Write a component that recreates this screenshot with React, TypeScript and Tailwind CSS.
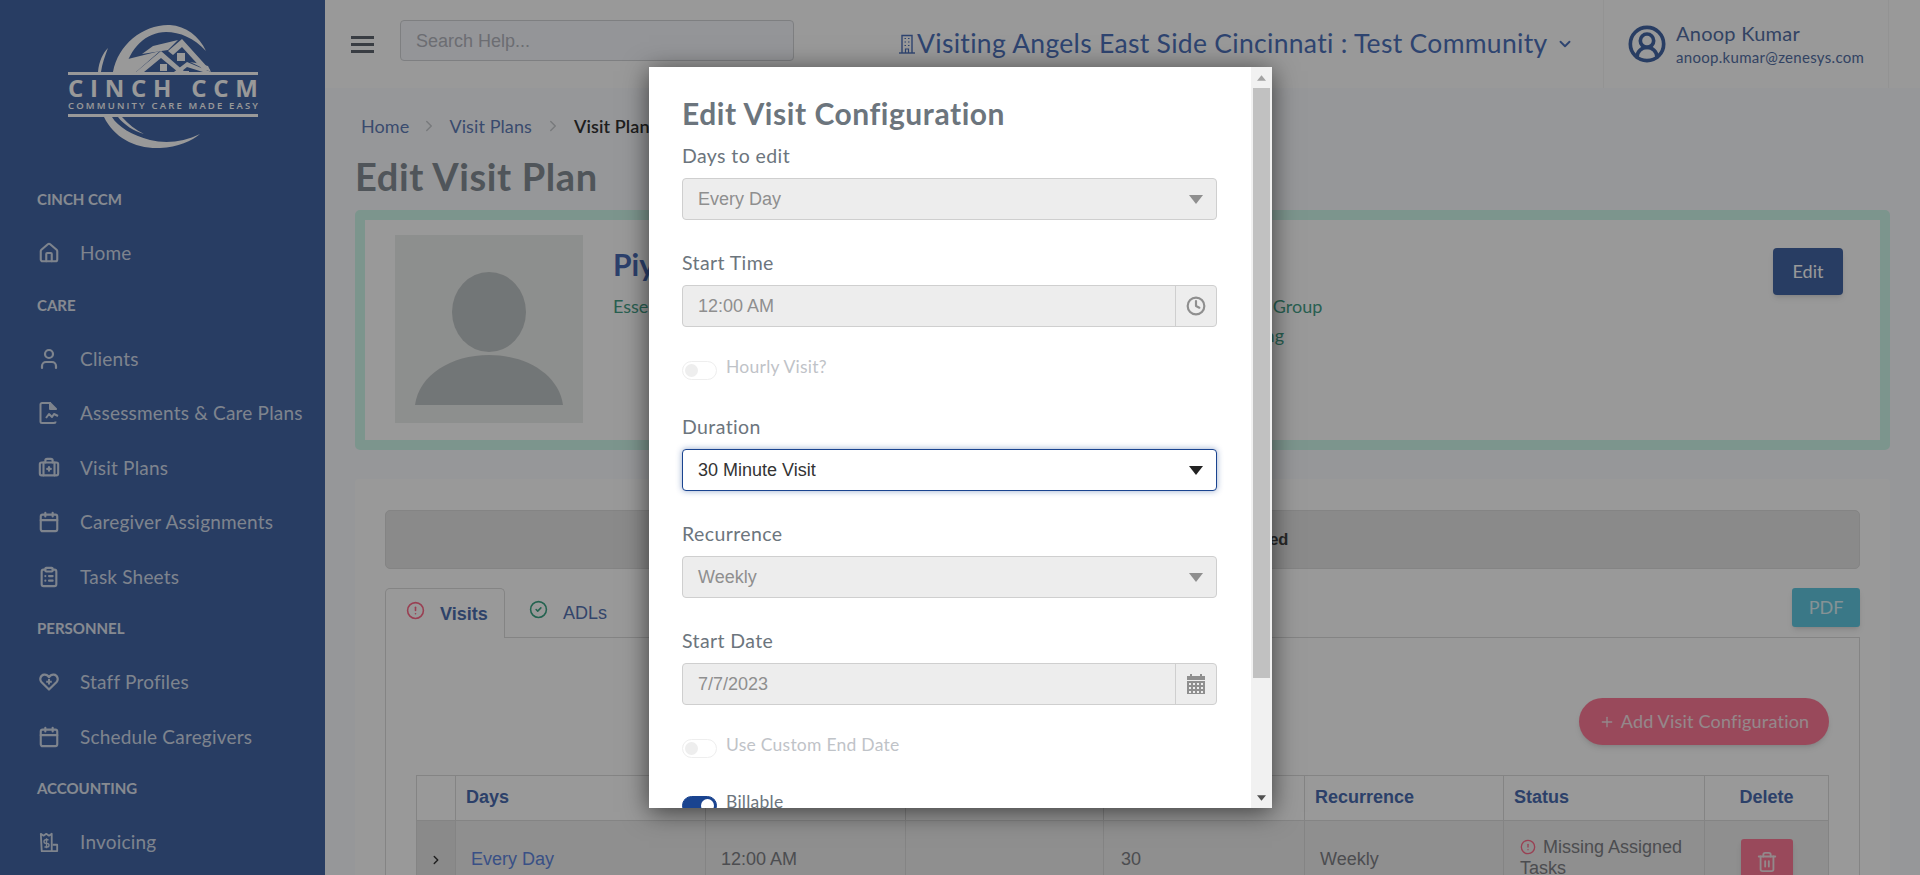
import type { ReactNode } from 'react';
import {
  BriefcaseMedical,
  Calendar,
  ChevronDown,
  ChevronRight,
  CircleAlert,
  CircleCheck,
  CircleUserRound,
  ClipboardList,
  Clock,
  Home,
  Plus,
  Trash2,
  User,
} from 'lucide-react';

const arial = "font-['Liberation_Sans',Arial,sans-serif]";

function Logo() {
  return (
    <svg viewBox="0 0 210 135" className="w-[210px] h-[135px]" fill="#fff">
      {/* ring */}
      <path d="M53 52 C58 24 84 4 110 5 C126 6 139 16 146 31 C134 18 120 12 106 12 C86 12 70 28 64 52 Z" />
      <path d="M38 52 C39 41 43 33 48 28 C45 36 42 44 41 52 Z" />
      <path d="M44 97 C54 118 76 129 100 128 C118 127 132 121 140 114 C124 122 106 124 90 120 C72 115 58 107 52 97 Z" />
      <path d="M62 97 C68 104 76 110 84 114 C74 111 64 105 58 97 Z" />
      {/* roofs */}
      <path d="M53 52 L68 39 L100 31 L76 52 Z" />
      <path d="M82 34 L93 26 L118 20 L108 30 Z" />
      <path d="M76 52 L101 31 L125 52 L118 52 L101 38 L84 52 Z" />
      <path d="M108 31 L122 19 L150 50 L143 50 L122 27 L113 35 Z" />
      <path d="M110 55 L127 42 L151 52 L143 52 L127 47 L117 55 Z" />
      <path d="M130 42 L136 43 L148 46 L151 52 Z" />
      {/* windows */}
      <path d="M117 33 H125 V41 H117 Z M100 44 H107 V51 H100 Z M124 51 H129 V55 H124 Z" />
      {/* rules and wordmark */}
      <rect x="8" y="52" width="190" height="3" />
      <rect x="8" y="94" width="190" height="3" />
      <text x="8" y="77" fontFamily="Open Sans, sans-serif" fontWeight="700" fontSize="24" textLength="190">
        CINCH CCM
      </text>
      <text x="8" y="89" fontFamily="Open Sans, sans-serif" fontWeight="600" fontSize="9.5" textLength="190">
        COMMUNITY CARE MADE EASY
      </text>
    </svg>
  );
}

function AssessIcon() {
  return (
    <svg viewBox="0 0 20 22" className="w-[20px] h-[22px]" fill="none" stroke="currentColor" strokeWidth="2" strokeLinejoin="round">
      <path d="M12 1 H3 a1.5 1.5 0 0 0 -1.5 1.5 V19.5 A1.5 1.5 0 0 0 3 21 H15 a1.5 1.5 0 0 0 1.5 -1.5" />
      <path d="M11 1 L17 7 H11 Z" fill="currentColor" />
      <path d="M7 16 L10 12 L13 15 L15 12 L19 14" />
    </svg>
  );
}

function InvoiceIcon() {
  return (
    <svg viewBox="0 0 20 22" className="w-[20px] h-[20px]" fill="none" stroke="currentColor" strokeWidth="2" strokeLinejoin="round">
      <path d="M1 2 L4 4 L7 2 L10 4 L13 2 V21 H2 Z" />
      <path d="M14 14 H19 V21 H13" />
      <path d="M9.5 8.5 H6.5 a1.5 1.5 0 0 0 0 4 H8 a1.5 1.5 0 0 1 0 4 H5 M7.3 7 V18" strokeWidth="1.5" />
    </svg>
  );
}

function StaffIcon() {
  return (
    <svg viewBox="0 0 20 18" className="w-[20px] h-[18px]" fill="none" stroke="currentColor" strokeWidth="2.2" strokeLinejoin="round">
      <path d="M10 16.5 L2.4 9 C0.4 6.8 1.2 2 5.2 1.6 C7.4 1.4 9 2.6 10 4.2 C11 2.6 12.6 1.4 14.8 1.6 C18.8 2 19.6 6.8 17.6 9 Z" />
      <path d="M10 6 V11.5 M7.2 8.7 H12.8" strokeWidth="2" />
    </svg>
  );
}

function BuildingIcon() {
  return (
    <svg viewBox="0 0 16 20" className="w-[16px] h-[20px]" fill="none" stroke="currentColor" strokeWidth="1.4">
      <path d="M3 19 V1.5 H13 V19" />
      <path d="M0 19 H16" />
      <path d="M5.5 4.5 H7 M9 4.5 H10.5 M5.5 8 H7 M9 8 H10.5 M5.5 11.5 H7 M9 11.5 H10.5 M6.5 19 V15 H9.5 V19" strokeWidth="1.2" />
    </svg>
  );
}

function NavSection({ children }: { children: ReactNode }) {
  return (
    <div className="h-[51px] pb-[2px] pl-[37px] flex items-center text-[15px] font-bold text-[#e0e6f2]">
      {children}
    </div>
  );
}

function NavItem({ icon, label }: { icon: ReactNode; label: string }) {
  return (
    <div className="h-[54.5px] pl-[38px] flex items-center text-[#d2dcec]">
      <div className="w-[22px] flex justify-center">{icon}</div>
      <span className="ml-[20px] text-[19px] tracking-[0.2px] whitespace-nowrap">{label}</span>
    </div>
  );
}

function Sidebar() {
  const ic = 'w-[22px] h-[22px] shrink-0';
  return (
    <aside className="w-[325px] shrink-0 h-full bg-[#4466a5] overflow-hidden">
      <div className="h-[175px] pt-[20px] pl-[60px]">
        <Logo />
      </div>
      <NavSection>CINCH CCM</NavSection>
      <NavItem icon={<Home className={ic} strokeWidth={2.3} />} label="Home" />
      <NavSection>CARE</NavSection>
      <NavItem icon={<User className="w-[24px] h-[24px] shrink-0" strokeWidth={2.2} />} label="Clients" />
      <NavItem icon={<AssessIcon />} label="Assessments & Care Plans" />
      <NavItem icon={<BriefcaseMedical className={ic} strokeWidth={2.3} />} label="Visit Plans" />
      <NavItem icon={<Calendar className={ic} strokeWidth={2.3} />} label="Caregiver Assignments" />
      <NavItem icon={<ClipboardList className={ic} strokeWidth={2.3} />} label="Task Sheets" />
      <NavSection>PERSONNEL</NavSection>
      <NavItem icon={<StaffIcon />} label="Staff Profiles" />
      <NavItem icon={<Calendar className={ic} strokeWidth={2.3} />} label="Schedule Caregivers" />
      <NavSection>ACCOUNTING</NavSection>
      <NavItem icon={<InvoiceIcon />} label="Invoicing" />
    </aside>
  );
}

function Topbar() {
  return (
    <header className="h-[88px] shrink-0 bg-white flex items-center">
      <div className="ml-[26px] w-[23px] flex flex-col gap-[4px]">
        <div className="h-[3px] bg-[#5f6670]" />
        <div className="h-[3px] bg-[#5f6670]" />
        <div className="h-[3px] bg-[#5f6670]" />
      </div>
      <div className={`ml-[26px] w-[394px] h-[41px] -mt-[7px] rounded-[4px] border border-[#d2d4d8] bg-[#f7f9fe] pl-[15px] pt-[1px] flex items-center text-[18px] text-[#b4b6be] ${arial}`}>
        Search Help...
      </div>
      <div className="ml-[105px] flex items-center text-[#4e72bb]">
        <BuildingIcon />
        <span className="ml-[2px] text-[26.5px] tracking-[0.3px] whitespace-nowrap">Visiting Angels East Side Cincinnati : Test Community</span>
        <ChevronDown className="ml-[9px] w-[18px] h-[18px]" strokeWidth={2.5} />
      </div>
      <div className="ml-auto mr-[31px] w-[286px] h-full border-x border-[#f5f5f5] flex items-center pl-[23px] bg-white">
        <CircleUserRound className="w-[40px] h-[40px] text-[#4466a5]" strokeWidth={2.2} />
        <div className="ml-[9px] -mt-[1px] text-[#5470a6] leading-none">
          <div className="text-[20px] tracking-[0.25px]">Anoop Kumar</div>
          <div className="mt-[7px] text-[15px] tracking-[0.3px]">anoop.kumar@zenesys.com</div>
        </div>
      </div>
    </header>
  );
}

function Breadcrumb() {
  return (
    <div className="mt-[26px] h-6 pl-[6px] flex items-center text-[18px] tracking-[0.1px] text-[#5f7cb8]">
      <span>Home</span>
      <ChevronRight className="mx-[11px] w-[18px] h-[18px] text-[#c8ccd0]" />
      <span>Visit Plans</span>
      <ChevronRight className="mx-[12px] w-[18px] h-[18px] text-[#c8ccd0]" />
      <span className="font-semibold text-[#333] whitespace-nowrap">Visit Plan</span>
    </div>
  );
}

function ProfileCard() {
  return (
    <div className="mt-[12px] h-[240px] rounded-[5px] border-[10px] border-[#cff8ec] bg-white flex pl-[30px] pt-[15px]">
      <svg viewBox="0 0 188 188" className="w-[188px] h-[188px] shrink-0 bg-[#eceeed]">
        <ellipse cx="94" cy="77" rx="37" ry="40" fill="#bfc5c6" />
        <path d="M20 170 C24 140 56 120 94 120 C132 120 164 140 168 170 Z" fill="#bfc5c6" />
      </svg>
      <div className="ml-[30px] pt-[9px]">
        <div className="text-[30px] font-bold text-[#4a6cb5] leading-[40px]">Piyush Test</div>
        <div className="mt-[8px] flex text-[18px] text-[#45a088] leading-[29px]">
          <div className="w-[623px]">Essential Services</div>
          <div>
            <div>Test Group</div>
            <div>Billing</div>
          </div>
        </div>
      </div>
      <button className="ml-auto mr-[37px] mt-[13px] w-[70px] h-[47px] rounded-[4px] bg-[#4466a5] text-white text-[18px] shadow-md">
        Edit
      </button>
    </div>
  );
}

function VisitTable() {
  const th = `border border-[#dcdcdc] px-[10px] pb-[2px] h-[45px] text-[18px] font-bold text-[#4a6cb0] ${arial}`;
  const td = 'border border-[#dcdcdc] align-top';
  return (
    <table className={`mt-[30px] w-[1412px] table-fixed border-collapse text-[18px] text-[#7f8186] ${arial}`}>
      <colgroup>
        <col className="w-[39px]" />
        <col className="w-[250px]" />
        <col className="w-[200px]" />
        <col className="w-[198px]" />
        <col className="w-[201px]" />
        <col className="w-[199px]" />
        <col className="w-[201px]" />
        <col className="w-[124px]" />
      </colgroup>
      <thead>
        <tr>
          <th className={th}></th>
          <th className={`${th} text-left`}>Days</th>
          <th className={`${th} text-left`}>Start Time</th>
          <th className={`${th} text-left`}>End Time</th>
          <th className={`${th} text-left`}>Duration</th>
          <th className={`${th} text-left`}>Recurrence</th>
          <th className={`${th} text-left`}>Status</th>
          <th className={`${th} text-center`}>Delete</th>
        </tr>
      </thead>
      <tbody className="bg-[#eeeeee]">
        <tr>
          <td className={`${td} bg-[#e6e6e6] pt-[25px] text-center`}>
            <ChevronRight className="inline w-[14px] h-[14px] text-[#333]" strokeWidth={2.5} />
          </td>
          <td className={`${td} pt-[25px] pl-[15px] text-[#5f86df]`}>Every Day</td>
          <td className={`${td} pt-[25px] pl-[15px]`}>12:00 AM</td>
          <td className={td}></td>
          <td className={`${td} pt-[25px] pl-[17px]`}>30</td>
          <td className={`${td} pt-[25px] pl-[15px]`}>Weekly</td>
          <td className={`${td} pt-[16px] pl-[16px] pr-[8px] leading-[21px]`}>
            <CircleAlert className="inline w-[16px] h-[16px] -mt-[3px] mr-[7px] text-[#ff6b8a]" />
            Missing Assigned Tasks
          </td>
          <td className={`${td} pt-[18px] pb-[10px]`}>
            <div className="mx-auto w-[52px] h-[46px] rounded-[3px] bg-[#ff7b98] flex items-center justify-center shadow-md">
              <Trash2 className="w-[22px] h-[22px] text-[#f4e4e8]" />
            </div>
          </td>
        </tr>
      </tbody>
    </table>
  );
}

function PlanCard() {
  return (
    <section className="mt-[29px] bg-white px-[30px] pt-[31px] pb-[40px] rounded-[4px]">
      <div className="h-[59px] rounded-[5px] border border-[#dcdcdc] bg-[#e6e6e6] flex items-center justify-center text-[16.5px] font-bold text-[#444]">
        <span className={arial}>This visit plan has not yet been completed</span>
      </div>
      <div className={`mt-[19px] flex items-start h-[49px] ${arial}`}>
        <div className="w-[120px] h-[50px] rounded-t-[5px] border border-b-0 border-[#dcdcdc] bg-white flex items-center pl-[20px]">
          <CircleAlert className="-mt-[6px] w-[19px] h-[19px] text-[#ff6b8a]" />
          <span className="ml-[15px] pt-[2px] text-[18px] font-bold text-[#4e6fb0]">Visits</span>
        </div>
        <div className="h-[49px] flex items-center pl-[24px]">
          <CircleCheck className="-mt-[6px] w-[19px] h-[19px] text-[#3ca585]" />
          <span className="ml-[15px] pt-[2px] text-[18px] text-[#5573b2]">ADLs</span>
        </div>
        <button className="ml-auto w-[68px] h-[39px] rounded-[3px] bg-[#62c8e1] text-[#dff4f9] text-[18px] shadow-md font-[Lato,sans-serif]">
          PDF
        </button>
      </div>
      <div className="border border-[#dcdcdc] px-[30px] pt-[60px] pb-[30px]">
        <div className="flex justify-end">
          <button className="h-[47px] w-[250px] rounded-full bg-[#ff7b98] text-[#f7e3e8] text-[18px] tracking-[0.2px] shadow-md flex items-center justify-center">
            <Plus className="w-[16px] h-[16px]" strokeWidth={2} />
            <span className="ml-[6px]">Add Visit Configuration</span>
          </button>
        </div>
        <VisitTable />
      </div>
    </section>
  );
}

function Triangle({ dark }: { dark?: boolean }) {
  return (
    <svg viewBox="0 0 14 9" className={`w-[14px] h-[9px] ${dark ? 'text-[#222]' : 'text-[#8f8f8f]'}`} fill="currentColor">
      <path d="M0 0 H14 L7 9 Z" />
    </svg>
  );
}

function FieldLabel({ children, first }: { children: ReactNode; first?: boolean }) {
  return (
    <div className={`h-6 mb-[10px] flex items-center text-[19.5px] tracking-[0.4px] text-[#6c757d] ${first ? 'mt-[14px]' : 'mt-[31px]'}`}>
      {children}
    </div>
  );
}

function SelectBox({ value, focused, first, label }: { value: string; focused?: boolean; first?: boolean; label: string }) {
  return (
    <div>
      <FieldLabel first={first}>{label}</FieldLabel>
      <div
        className={`h-[42px] rounded-[4px] border pl-[15px] pr-[13px] flex items-center justify-between text-[18px] ${arial} ${
          focused
            ? 'border-[#1a4490] bg-white text-[#333] shadow-[0_0_6px_rgba(26,68,144,0.45)]'
            : 'border-[#cfcfcf] bg-[#ededed] text-[#8f8f8f]'
        }`}
      >
        <span>{value}</span>
        <Triangle dark={focused} />
      </div>
    </div>
  );
}

function AddonInput({ label, value, icon }: { label: string; value: string; icon: ReactNode }) {
  return (
    <div>
      <FieldLabel>{label}</FieldLabel>
      <div className={`h-[42px] rounded-[4px] border border-[#cfcfcf] bg-[#ededed] flex text-[18px] text-[#8f8f8f] ${arial}`}>
        <div className="flex-1 pl-[15px] flex items-center">{value}</div>
        <div className="w-[41px] border-l border-[#cfcfcf] flex items-center justify-center">{icon}</div>
      </div>
    </div>
  );
}

function Toggle({ label, on, gap }: { label: string; on?: boolean; gap: string }) {
  return (
    <div className={`flex items-start ${gap}`}>
      <div
        className={`w-[35px] h-[19px] rounded-full border flex items-center px-[2px] ${
          on ? 'bg-[#1a4490] border-[#1a4490] justify-end' : 'bg-white border-[#eeeeee]'
        }`}
      >
        <div className={`w-[13px] h-[13px] rounded-full ${on ? 'bg-white' : 'bg-[#eeeeee]'}`} />
      </div>
      <span className={`ml-[9px] -mt-[6px] text-[17.5px] tracking-[0.25px] leading-6 ${on ? 'text-[#6c757d]' : 'text-[#bfc3c8]'}`}>{label}</span>
    </div>
  );
}

function CalendarGrid() {
  return (
    <svg viewBox="0 0 18 20" className="w-[18px] h-[20px]" fill="#8f8f8f">
      <rect x="3" y="0" width="2" height="4" />
      <rect x="13" y="0" width="2" height="4" />
      <rect x="0" y="2" width="18" height="4" />
      <path
        fillRule="evenodd"
        d="M0 7 H18 V20 H0 Z M2 9 V11 H4 V9 Z M6 9 V11 H8 V9 Z M10 9 V11 H12 V9 Z M14 9 V11 H16 V9 Z M2 13 V15 H4 V13 Z M6 13 V15 H8 V13 Z M10 13 V15 H12 V13 Z M14 13 V15 H16 V13 Z M2 17 V19 H4 V17 Z M6 17 V19 H8 V17 Z M10 17 V19 H12 V17 Z M14 17 V19 H16 V17 Z"
      />
    </svg>
  );
}

function EditModal() {
  return (
    <div className="absolute left-[649px] top-[67px] w-[623px] h-[741px] bg-white flex overflow-hidden shadow-[0_4px_24px_rgba(0,0,0,0.6)]">
      <div className="flex-1 pl-[33px] pr-[34px] pt-[29px] overflow-hidden">
        <h2 className="h-[34px] flex items-center text-[30px] tracking-[0.55px] font-bold text-[#6c757d] whitespace-nowrap">Edit Visit Configuration</h2>
        <SelectBox first label="Days to edit" value="Every Day" />
        <AddonInput label="Start Time" value="12:00 AM" icon={<Clock className="w-[20px] h-[20px] text-[#8f8f8f]" strokeWidth={2.6} />} />
        <Toggle label="Hourly Visit?" gap="mt-[34px]" />
        <div className="pt-[4px]">
          <SelectBox focused label="Duration" value="30 Minute Visit" />
        </div>
        <SelectBox label="Recurrence" value="Weekly" />
        <AddonInput label="Start Date" value="7/7/2023" icon={<CalendarGrid />} />
        <Toggle label="Use Custom End Date" gap="mt-[34px]" />
        <Toggle label="Billable" on gap="mt-[38px]" />
      </div>
      {/* drawn scrollbar */}
      <div className="w-[21px] shrink-0 bg-[#f1f1f1] flex flex-col items-center">
        <div className="h-[21px] flex items-center justify-center">
          <svg viewBox="0 0 10 6" className="w-[9px] h-[6px]" fill="#a3a3a3"><path d="M5 0 L10 6 H0 Z" /></svg>
        </div>
        <div className="w-[17px] h-[590px] bg-[#c1c1c1]" />
        <div className="mt-auto h-[21px] flex items-center justify-center">
          <svg viewBox="0 0 10 6" className="w-[9px] h-[6px]" fill="#505050"><path d="M0 0 H10 L5 6 Z" /></svg>
        </div>
      </div>
    </div>
  );
}

export default function App() {
  return (
    <div className="relative w-full h-screen overflow-hidden flex bg-[#fbfcff] font-[Lato,sans-serif]">
      <Sidebar />
      <main className="flex-1 min-w-0 flex flex-col">
        <Topbar />
        <div className="pl-[30px] pr-[30px]">
          <Breadcrumb />
          <h1 className="mt-[16px] h-[44px] flex items-center text-[38px] tracking-[0.6px] font-bold text-[#858e96]">Edit Visit Plan</h1>
          <ProfileCard />
          <PlanCard />
        </div>
      </main>
      <div className="absolute inset-0 bg-black/40" />
      <EditModal />
    </div>
  );
}
